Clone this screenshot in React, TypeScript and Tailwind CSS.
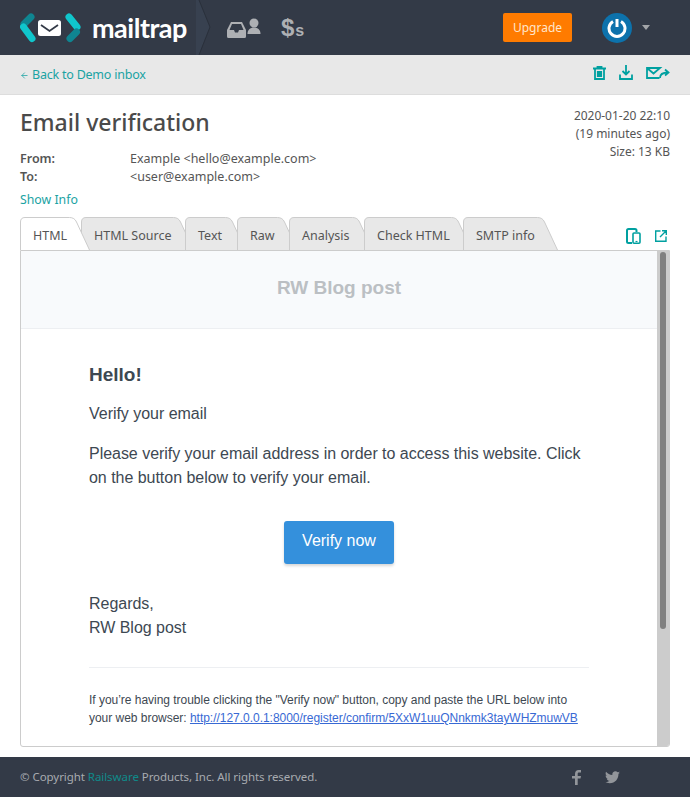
import React from 'react';
import { ArrowLeft } from 'lucide-react';

const tabs = [
  { label: 'HTML', width: 70, active: true },
  { label: 'HTML Source', width: 113 },
  { label: 'Text', width: 61 },
  { label: 'Raw', width: 61 },
  { label: 'Analysis', width: 84 },
  { label: 'Check HTML', width: 108 },
  { label: 'SMTP info', width: 95 },
];

function Tab({ label, width, active = false }: { label: string; width: number; active?: boolean }) {
  const right = width - 0.5;
  const d = `M0.5 33V5Q0.5 0.5 5 0.5H${right - 20}Q${right - 15} 0.5 ${right - 13} 5L${right} 33`;
  return (
    <div className={`relative h-[34px] shrink-0 ${active ? 'z-10' : ''}`} style={{ width, marginRight: -9 }}>
      <svg className="absolute inset-0" width={width} height={34} fill="none">
        <path d={`${d}Z`} fill={active ? '#ffffff' : '#e8e8e8'} />
        <path d={d} stroke="#cccccc" />
      </svg>
      <span className="absolute left-[13px] top-[10px] text-[12.5px] leading-[18px] text-[#555555] whitespace-nowrap">{label}</span>
    </div>
  );
}

function Logo() {
  return (
    <div className="flex items-center">
      <svg width="61" height="30" viewBox="0 0 61 30" fill="none" strokeWidth="7" strokeLinecap="round">
        <path d="M11 4 4 11" stroke="#0f8591" />
        <path d="M3.500 14 12 25.500" stroke="#10c6cc" />
        <rect x="18" y="7" width="23" height="16" rx="2.500" fill="#ffffff" stroke="none" />
        <path d="M21 12 29.500 18 38 12" stroke="#333a47" strokeWidth="1.800" strokeLinecap="butt" />
        <path d="M49 4 57 14" stroke="#10c6cc" />
        <path d="M56.500 19 50 25.500" stroke="#0f8591" />
      </svg>
      <span className="ml-[11px] text-[27px] leading-8 font-bold text-white font-['Lato',sans-serif] tracking-[-0.5px]">mailtrap</span>
    </div>
  );
}

function InboxIcon() {
  return (
    <svg width="34" height="23" viewBox="0 0 34 23" fill="#aeb0b4">
      <path
        d="M4 6h11l4 8v6.500a1.500 1.500 0 0 1-1.500 1.500h-16A1.500 1.500 0 0 1 0 20.500V14zM5 8 2.500 14h4.500l1 2.500h3l1-2.500h4.500L14 8z"
        fillRule="evenodd"
      />
      <circle cx="27" cy="7" r="4.500" />
      <path d="M20.500 18c0-4 2.500-6.500 6.500-6.500s6.500 2.500 6.500 6.500z" />
    </svg>
  );
}

function TrashIcon() {
  return (
    <svg width="13" height="14" viewBox="0 0 13 14" fill="none" stroke="#00a0a0" strokeWidth="1.800">
      <path d="M0 2.500h13M4.500 2.500V1h4v1.500M2 2.500V13h9V2.500M4.800 5v6M6.500 5v6M8.200 5v6" />
    </svg>
  );
}

function DownloadIcon() {
  return (
    <svg width="14" height="15" viewBox="0 0 14 15" fill="none" stroke="#00a0a0" strokeWidth="1.800">
      <path d="M7 0v9M3.500 6 7 9.500 10.500 6M1 9.500V14h12V9.500" />
    </svg>
  );
}

function ForwardIcon() {
  return (
    <svg width="24" height="12" viewBox="0 0 24 12" fill="none" stroke="#00a0a0" strokeWidth="1.800">
      <path d="M13.500 11H1V1h13l-6.500 5.500L1 1" />
      <path d="M14 11c0-4 3-5.500 8-5.500M19 2.500l3.500 3-3.500 3" />
    </svg>
  );
}

function DevicesIcon() {
  return (
    <svg width="15" height="16" viewBox="0 0 15 16" fill="none">
      <path d="M6 15H2.500A1.500 1.500 0 0 1 1 13.500V2.500A1.500 1.500 0 0 1 2.500 1H9a1.500 1.500 0 0 1 1.500 1.500V4" stroke="#00a0a0" strokeWidth="2" />
      <rect x="7" y="5" width="7" height="10.200" rx="1" stroke="#00a0a0" strokeWidth="1.600" fill="#ffffff" />
      <path d="M9.500 13.500h2" stroke="#00a0a0" strokeWidth="1.200" />
    </svg>
  );
}

function ExternalIcon() {
  return (
    <svg width="12" height="12" viewBox="0 0 12 12" fill="none" stroke="#00a0a0" strokeWidth="1.400">
      <path d="M5.500 1H.7v10.300H11V6.500M7 .7h4.300V5M11 1 5 7" />
    </svg>
  );
}

function PowerAvatar() {
  return (
    <div className="w-[30px] h-[30px] rounded-full bg-[#0d72ac] flex items-center justify-center">
      <svg width="20" height="20" viewBox="0 0 20 20" fill="none" stroke="#ffffff" strokeWidth="3">
        <path d="M6 3.500a8 8 0 1 0 8 0" />
        <path d="M10 1v8" />
      </svg>
    </div>
  );
}

export default function App() {
  return (
    <div className="w-[690px] h-[797px] flex flex-col bg-white overflow-hidden antialiased font-['Noto_Sans',sans-serif] text-[#555555]">
      {/* top bar */}
      <header className="h-[55px] shrink-0 bg-[#333a47] flex items-center pl-5 pr-[40px] relative">
        <Logo />
        <svg className="absolute left-[196px] top-0" width="16" height="55" fill="none">
          <path d="M3 0 14 27 3 55H0V0z" fill="#384150" />
          <path d="M3 0 14 27 3 55" stroke="#2a303b" />
        </svg>
        <div className="ml-[40px] flex items-center gap-[20px]">
          <InboxIcon />
          <div className="flex items-baseline text-[#aeb0b4] font-bold font-['Liberation_Sans',sans-serif]">
            <span className="text-[24px] leading-6">$</span>
            <span className="text-[16px] leading-4 ml-[1px]">s</span>
          </div>
        </div>
        <div className="ml-auto flex items-center">
          <button className="w-[69px] h-[29px] rounded-[2px] bg-[#ff7b00] text-[#ffe6cc] text-[12px]">Upgrade</button>
          <div className="ml-[30px]">
            <PowerAvatar />
          </div>
          <div className="ml-[10px] w-0 h-0 border-x-4 border-x-transparent border-t-[5px] border-t-[#a3a5a9]" />
        </div>
      </header>

      {/* back link bar */}
      <div className="h-[40px] shrink-0 bg-[#e8e8e8] border-b border-[#dddddd] flex items-center justify-between pl-5 pr-[20px]">
        <a className="flex items-center text-[12.500px] tracking-[-0.22px] text-[#1aa3a3] mt-[1px]">
          <ArrowLeft size={9} strokeWidth={2} className="mr-[3px]" />
          Back to Demo inbox
        </a>
        <div className="flex items-center gap-[13px] mb-[4px]">
          <TrashIcon />
          <DownloadIcon />
          <ForwardIcon />
        </div>
      </div>

      {/* message meta */}
      <section className="flex justify-between px-5 pt-[12px] h-[122px] shrink-0">
        <div>
          <h1 className="text-[23px] leading-[30px] font-medium text-[#4a4a4a]">Email verification</h1>
          <div className="mt-[13px] text-[12.500px] leading-[18px]">
            <div className="flex">
              <span className="w-[110px] font-semibold">From:</span>
              <span>Example &lt;hello@example.com&gt;</span>
            </div>
            <div className="flex">
              <span className="w-[110px] font-semibold">To:</span>
              <span>&lt;user@example.com&gt;</span>
            </div>
          </div>
          <a className="block mt-[5px] text-[12.300px] leading-[18px] text-[#1aa3a3]">Show Info</a>
        </div>
        <div className="text-right text-[12px] leading-[18px] tracking-[-0.02px]">
          <div>2020-01-20 22:10</div>
          <div>(19 minutes ago)</div>
          <div>Size: 13 KB</div>
        </div>
      </section>

      {/* tabs */}
      <div className="h-[33px] shrink-0 mx-5 flex items-start relative">
        <div className="flex">
          {tabs.map((t) => (
            <Tab key={t.label} {...t} />
          ))}
        </div>
        <div className="ml-auto mr-[3px] flex items-center gap-[14px] mt-[11px]">
          <DevicesIcon />
          <ExternalIcon />
        </div>
      </div>

      {/* email frame */}
      <div className="mx-5 h-[497px] shrink-0 flex border border-[#cccccc] rounded-b-[3px] overflow-hidden relative">
        <div className="flex-1 font-['Liberation_Sans',sans-serif] text-[#3d4852]">
          <div className="h-[78px] bg-[#f8fafc] border-b border-[#edeff2] flex items-center justify-center pb-[2px]">
            <span className="text-[19px] font-bold text-[#bbbfc3]">RW Blog post</span>
          </div>
          <div className="pl-[68px] pr-[68px] pt-[33px]">
            <h2 className="text-[19px] leading-[26px] font-bold">Hello!</h2>
            <p className="mt-[14px] text-[16px] leading-[24px] tracking-[-0.03px]">Verify your email</p>
            <p className="mt-[16px] text-[16px] leading-[24px] tracking-[-0.03px]">
              Please verify your email address in order to access this website. Click on the button below to verify your email.
            </p>
            <div className="mt-[31px] flex justify-center">
              <a className="w-[110px] h-[43px] rounded-[3px] bg-[#3490dc] text-white text-[16px] flex items-center justify-center shadow-[0_2px_3px_rgba(0,0,0,0.16)] pb-[3px]">
                Verify now
              </a>
            </div>
            <p className="mt-[28px] text-[16px] leading-[24px] tracking-[-0.03px]">
              Regards,
              <br />
              RW Blog post
            </p>
            <div className="mt-[27px] border-t border-[#edeff2]" />
            <p className="mt-[23px] text-[12px] leading-[18px] tracking-[-0.025px]">
              If you’re having trouble clicking the "Verify now" button, copy and paste the URL below into your web browser:{' '}
              <a className="text-[#3869d4] underline">http://127.0.0.1:8000/register/confirm/5XxW1uuQNnkmk3tayWHZmuwVB</a>
            </p>
          </div>
        </div>
        <div className="w-[12px] shrink-0 bg-[#cccccc] flex justify-center pt-[1px]">
          <div className="w-[6px] h-[377px] rounded-full bg-[#808080]" />
        </div>
      </div>

      {/* footer */}
      <footer className="mt-auto h-[40px] shrink-0 bg-[#333a47] flex items-center pl-5 text-[11.500px] tracking-[-0.06px] text-[#a8abb0]">
        <span>
          © Copyright <span className="text-[#0f8a8a]">Railsware</span> Products, Inc. All rights reserved.
        </span>
        <div className="ml-auto mr-[70px] flex items-center gap-[24px]">
          <svg width="9" height="15" viewBox="0 0 9 15" fill="#92959a">
            <path d="M3 15V8.500H0V6h3V4c0-2.500 1.500-4 3.500-4H9v2.500H7c-1 0-1.300.5-1.300 1.500v2H9l-.5 2.500H5.700V15z" />
          </svg>
          <svg width="15" height="13" viewBox="0 0 24 20" fill="#92959a">
            <path d="M24 2.400c-.9.400-1.800.7-2.800.8 1-.6 1.800-1.600 2.200-2.700-1 .6-2 1-3.100 1.200C19.300.7 18 0 16.600 0c-2.700 0-4.900 2.200-4.900 4.900 0 .4 0 .8.100 1.100C7.700 5.800 4.100 3.900 1.700.9c-.4.700-.7 1.600-.7 2.500 0 1.700.9 3.200 2.200 4.100-.8 0-1.600-.2-2.200-.6v.1c0 2.400 1.700 4.400 3.900 4.800-.4.100-.8.200-1.300.2-.3 0-.6 0-.9-.1.600 2 2.400 3.400 4.600 3.400-1.700 1.300-3.800 2.100-6.100 2.100-.4 0-.8 0-1.200-.1C2.200 18.300 4.800 19 7.500 19c9.100 0 14-7.500 14-14v-.6c1-.7 1.800-1.600 2.500-2z" />
          </svg>
        </div>
      </footer>
    </div>
  );
}
